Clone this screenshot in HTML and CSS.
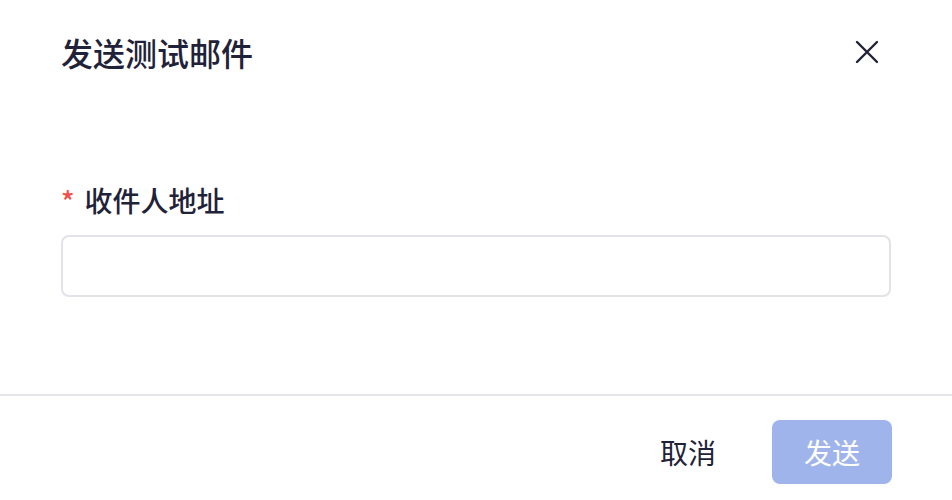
FILE: index.html
```html
<!DOCTYPE html>
<html>
<head>
	<meta charset="UTF-8">
	<title>发送测试邮件</title>
	<link rel="stylesheet" href="styles.css">
</head>
<body>
	<div class="dialog">
		<div class="dialog-header">
			<h2 class="dialog-title">发送测试邮件</h2>
			<button class="dialog-close" type="button">
				<svg width="24" height="24" viewBox="0 0 24 24" fill="none" stroke="#1f2238" stroke-width="2.4" stroke-linecap="round">
					<path d="M2 2 L22 22 M22 2 L2 22"/>
				</svg>
			</button>
		</div>
		<div class="dialog-body">
			<label class="form-label"><span class="required">*</span>收件人地址</label>
			<input class="form-input" type="text">
		</div>
		<div class="dialog-footer">
			<button class="btn btn-text" type="button">取消</button>
			<button class="btn btn-primary" type="button" disabled>发送</button>
		</div>
	</div>
</body>
</html>
```

FILE: styles.css
```css
body,div,h2,label,input,button{
	margin: 0;
	padding: 0;
}
body{
	background: #fff;
	font-family: "Noto Sans CJK SC", "Noto Sans", sans-serif;
	color: #1f2238;
}
.dialog{
	width: 952px;
	height: 500px;
	background: #fff;
	display: flex;
	flex-direction: column;
}
.dialog-header{
	height: 104px;
	padding: 32px 61px 0 61px;
	box-sizing: border-box;
	display: flex;
	justify-content: space-between;
	align-items: flex-start;
}
.dialog-title{
	font-size: 32px;
	line-height: 40px;
	font-weight: 500;
}
.dialog-close{
	border: none;
	background: none;
	width: 24px;
	height: 24px;
	margin-top: 8px;
	margin-right: 12px;
	cursor: pointer;
}
.dialog-close svg{
	display: block;
}
.dialog-body{
	padding: 76px 61px 0 61px;
	height: 290px;
	box-sizing: border-box;
}
.form-label{
	display: block;
	font-size: 28px;
	line-height: 40px;
	font-weight: 500;
}
.required{
	color: #f0524b;
	margin-right: 10px;
}
.form-input{
	display: block;
	width: 100%;
	height: 62px;
	margin-top: 15px;
	box-sizing: border-box;
	border: 2px solid #e1e3e9;
	border-radius: 8px;
	outline: none;
}
.dialog-footer{
	border-top: 2px solid #e5e6ec;
	padding: 24px 60px 0 61px;
	display: flex;
	justify-content: flex-end;
	align-items: center;
	gap: 22px;
}
.btn{
	height: 64px;
	border: none;
	border-radius: 8px;
	font-family: inherit;
	font-size: 28px;
	background: none;
}
.btn-text{
	color: #1f2238;
	padding: 0 34px;
}
.btn-primary{
	width: 120px;
	background: #a0b4ec;
	color: #fff;
}
```
